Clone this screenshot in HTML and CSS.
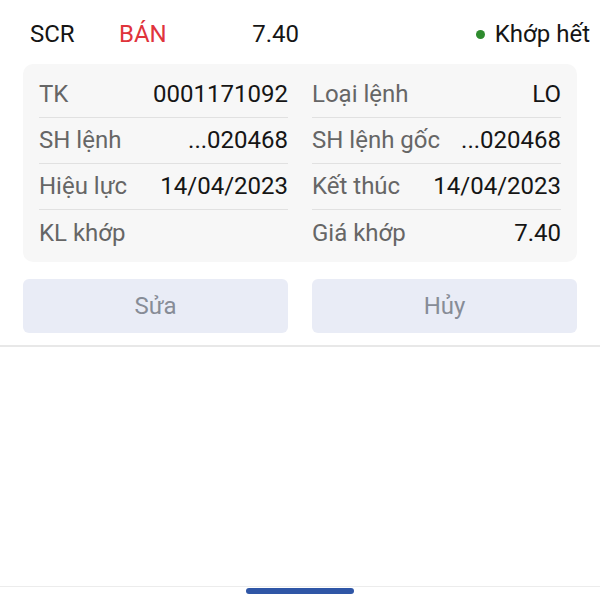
FILE: index.html
```html
<!DOCTYPE html>
<html lang="vi">
<head>
	<meta charset="utf-8">
	<meta name="viewport" content="width=device-width, initial-scale=1">
	<title>Chi tiết lệnh</title>
	<link rel="stylesheet" href="styles.css">
</head>

<body>
	<div id="page">
		<div class="order-head">
			<span class="sym">SCR</span>
			<span class="side sell">BÁN</span>
			<span class="price">7.40</span>
			<span class="status"><i class="dot"></i>Khớp hết</span>
		</div>

		<div class="card">
			<div class="cell"><span class="label">TK</span><span class="value">0001171092</span></div>
			<div class="cell"><span class="label">Loại lệnh</span><span class="value">LO</span></div>
			<div class="cell"><span class="label">SH lệnh</span><span class="value">...020468</span></div>
			<div class="cell"><span class="label">SH lệnh gốc</span><span class="value">...020468</span></div>
			<div class="cell"><span class="label">Hiệu lực</span><span class="value">14/04/2023</span></div>
			<div class="cell"><span class="label">Kết thúc</span><span class="value">14/04/2023</span></div>
			<div class="cell last"><span class="label">KL khớp</span><span class="value"></span></div>
			<div class="cell last"><span class="label">Giá khớp</span><span class="value">7.40</span></div>
		</div>

		<div class="actions">
			<button type="button" class="btn" disabled>Sửa</button>
			<button type="button" class="btn" disabled>Hủy</button>
		</div>

		<div class="spacer"></div>

		<div class="nav-bar"><span class="handle"></span></div>
	</div>
</body>

</html>
```

FILE: styles.css
```css
html {
	box-sizing: border-box;
}
*,
*::before,
*::after {
	box-sizing: inherit;
}

body {
	background-color: #fff;
	color: #151515;
	font-family: Roboto, "Noto Sans", sans-serif;
	font-size: 24px;
	margin: 0;
	padding: 0;
}

#page {
	display: flex;
	flex-direction: column;
	height: 600px;
}

.order-head {
	align-items: center;
	display: grid;
	grid-template-columns: 89px 80px 100px 1fr;
	height: 64px;
	padding: 4px 10px 0 30px;
}

.sell {
	color: #e0343c;
}

.price {
	text-align: right;
}

.status {
	align-items: center;
	display: flex;
	justify-content: flex-end;
}

.dot {
	background-color: #2e8b2e;
	border-radius: 50%;
	display: inline-block;
	height: 9px;
	margin-right: 10px;
	width: 9px;
}

.card {
	background-color: #f7f7f7;
	border-radius: 10px;
	column-gap: 24px;
	display: grid;
	grid-template-columns: 1fr 1fr;
	margin: 0 23px;
	padding: 8px 16px 6px;
}

.cell {
	align-items: center;
	border-bottom: 1px solid #e1e1e1;
	display: flex;
	height: 46px;
	justify-content: space-between;
	padding-bottom: 1px;
}

.cell.last {
	border-bottom: none;
}

.label {
	color: #666;
}

.value {
	color: #151515;
}

.actions {
	border-bottom: 2px solid #e8e8e8;
	column-gap: 24px;
	display: grid;
	grid-template-columns: 1fr 1fr;
	margin-top: 17px;
	padding: 0 23px 12px;
}

.btn {
	background-color: #e9ecf6;
	border: none;
	border-radius: 6px;
	color: #878c97;
	font-family: inherit;
	font-size: 24px;
	height: 54px;
}

.spacer {
	flex: 1;
}

.nav-bar {
	border-top: 1px solid #ececec;
	display: flex;
	height: 14px;
	justify-content: center;
}

.handle {
	background-color: #2f56a6;
	border-radius: 4px;
	height: 6px;
	margin-top: 1px;
	width: 108px;
}
```
